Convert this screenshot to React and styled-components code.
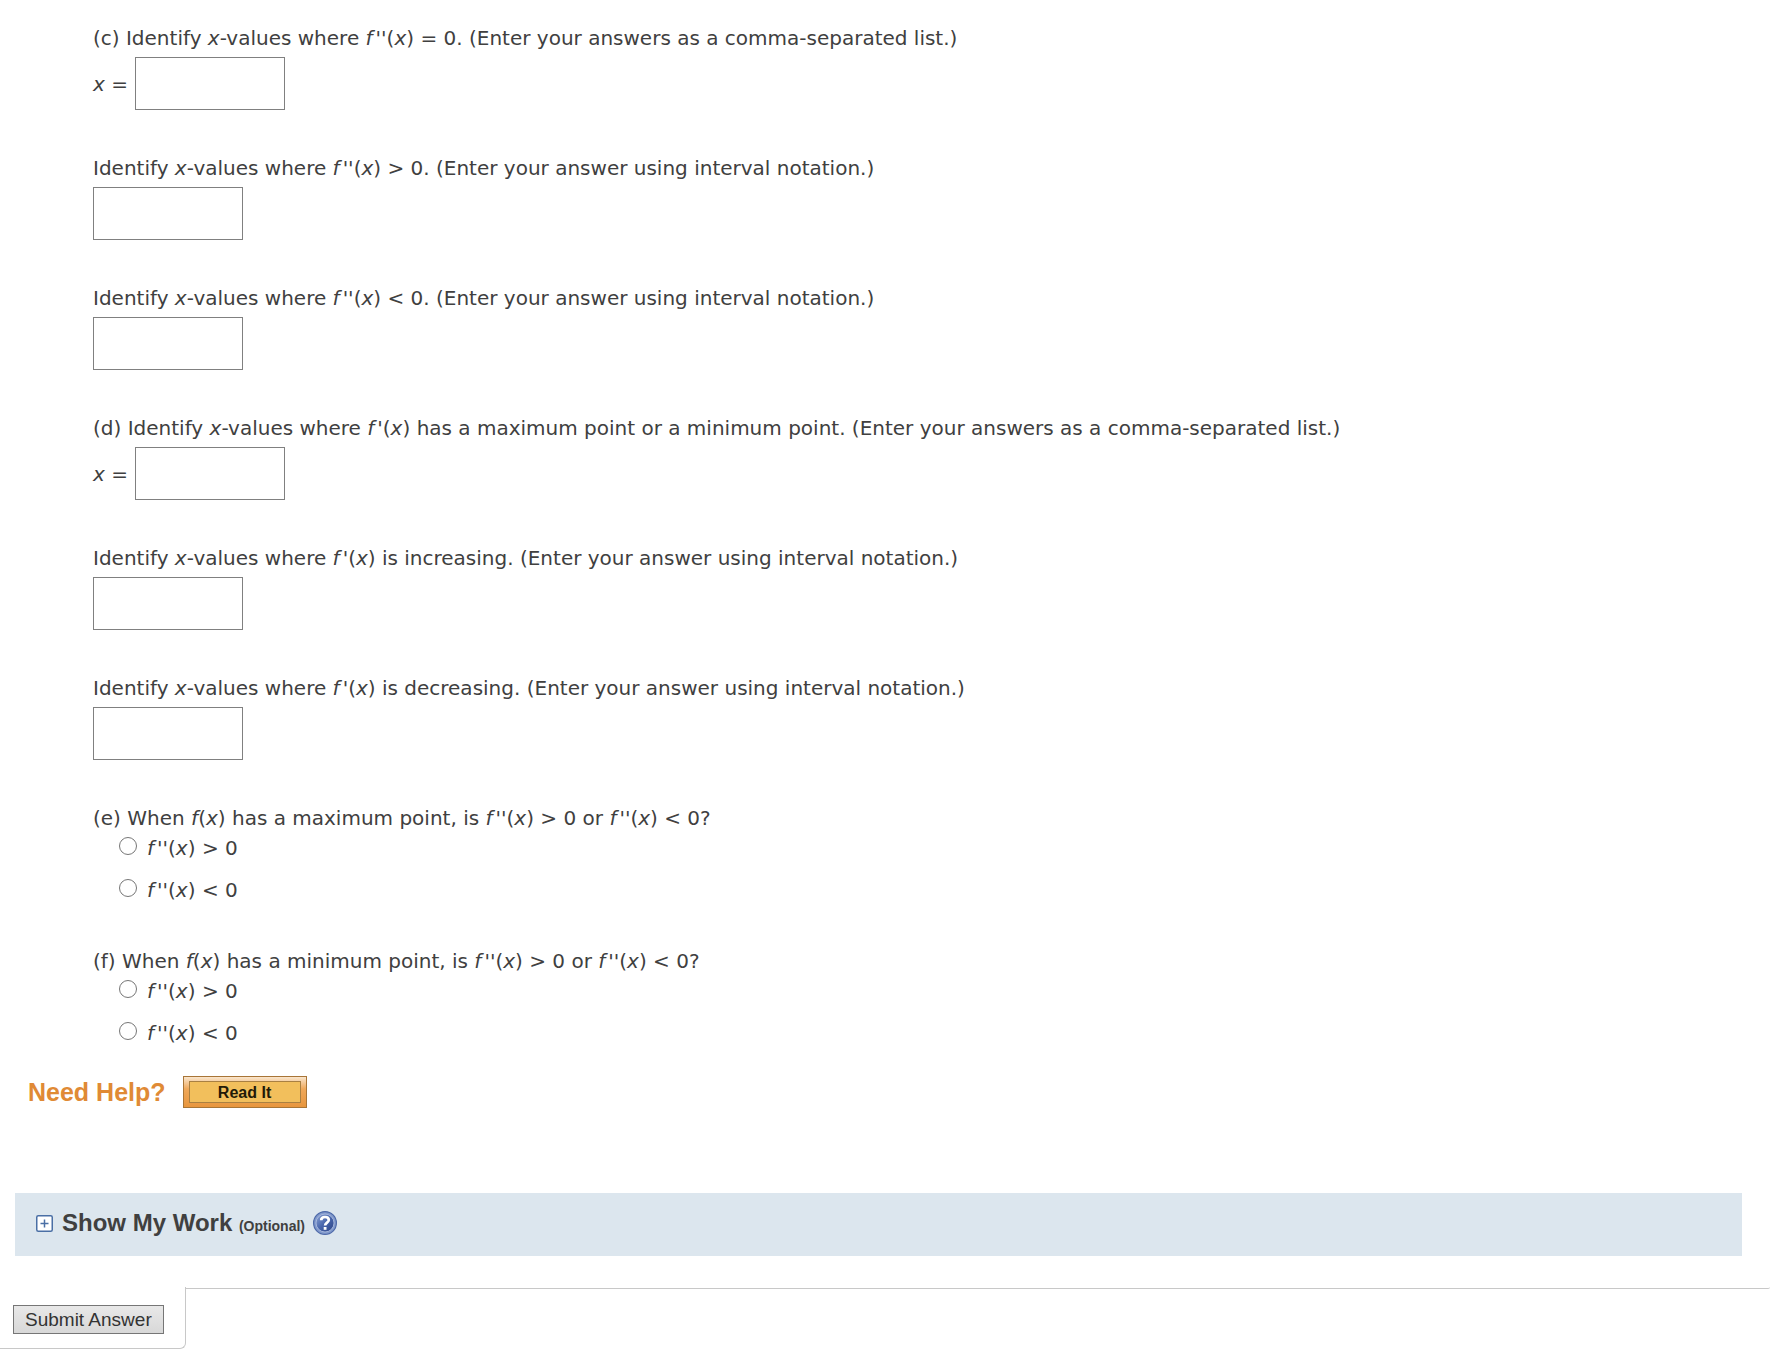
import React, {useState} from 'react'
import styled, {createGlobalStyle} from 'styled-components'

const GlobalStyle = createGlobalStyle`
* {
  box-sizing: border-box;
}
body {
  margin: 0;
  background: #fff;
  color: #404040;
  font-family: Verdana, "DejaVu Sans", sans-serif;
  font-size: 20px;
  line-height: 30px;
}
`

const questions = [
  {id: 'c1', part: '(c)', primes: 2, rest: '= 0. (Enter your answers as a comma-separated list.)', prefix: true},
  {id: 'c2', primes: 2, rest: '> 0. (Enter your answer using interval notation.)'},
  {id: 'c3', primes: 2, rest: '< 0. (Enter your answer using interval notation.)'},
  {id: 'd1', part: '(d)', primes: 1, rest: 'has a maximum point or a minimum point. (Enter your answers as a comma-separated list.)', prefix: true},
  {id: 'd2', primes: 1, rest: 'is increasing. (Enter your answer using interval notation.)'},
  {id: 'd3', primes: 1, rest: 'is decreasing. (Enter your answer using interval notation.)'},
]

const choices = [
  {id: 'e', part: '(e)', extremum: 'maximum'},
  {id: 'f', part: '(f)', extremum: 'minimum'},
]

function Fn({primes = 0}) {
  return <>
    <i>f</i>{primes > 0 && <Prime>{"'".repeat(primes)}</Prime>}(<i>x</i>)
  </>
}

function Question({id, part, primes, rest, prefix}) {
  return <Block>
    <label htmlFor={id}>{part} Identify <i>x</i>-values where <Fn primes={primes}/> {rest}</label>
    <AnswerRow>
      {prefix && <label htmlFor={id}><i>x</i> =</label>}
      <AnswerInput id={id} type="text"/>
    </AnswerRow>
  </Block>
}

function Choice({id, part, extremum}) {
  return <ChoiceGroup>
    <legend>{part} When <Fn/> has a {extremum} point, is <Fn primes={2}/> &gt; 0 or <Fn primes={2}/> &lt; 0?</legend>
    <Options>
      {['>', '<'].map(sign => <Option key={sign}>
        <Radio type="radio" name={id} value={sign}/>
        <span><Fn primes={2}/> {sign} 0</span>
      </Option>)}
    </Options>
  </ChoiceGroup>
}

function PlusIcon() {
  return <svg width="17" height="17" viewBox="0 0 17 17" aria-hidden="true">
    <rect x="0.75" y="0.75" width="15.5" height="15.5" rx="1.5" fill="#fff" stroke="#4a6fa5" strokeWidth="1.5"/>
    <path d="M4.5 8.5h8M8.5 4.5v8" stroke="#4a6fa5" strokeWidth="1.5"/>
  </svg>
}

function HelpIcon() {
  return <svg width="24" height="24" viewBox="0 0 24 24" aria-hidden="true">
    <defs>
      <linearGradient id="helpFill" x1="0" y1="0" x2="1" y2="1">
        <stop offset="0" stopColor="#8ea6d6"/>
        <stop offset="0.5" stopColor="#4865ab"/>
        <stop offset="1" stopColor="#2c4485"/>
      </linearGradient>
    </defs>
    <circle cx="12" cy="12" r="11.4" fill="#8199cb" stroke="#4d69a9" strokeWidth="1.2"/>
    <circle cx="12" cy="12" r="9" fill="url(#helpFill)" stroke="#b3c2e2" strokeWidth="0.8"/>
    <path d="M8.2 9.2C8.2 7 9.8 6 12 6s3.8 1.2 3.8 3c0 2.5-3.7 2.7-3.7 5.4" fill="none" stroke="#fff" strokeWidth="2.7"/>
    <rect x="10.7" y="16" width="2.8" height="2.8" fill="#fff"/>
  </svg>
}

export default function App() {
  const [open, setOpen] = useState(false)
  return <>
    <GlobalStyle/>
    <main>
      <Questions>
        {questions.map(q => <Question key={q.id} {...q}/>)}
        {choices.map(c => <Choice key={c.id} {...c}/>)}
      </Questions>
      <HelpRow>
        <HelpTitle>Need Help?</HelpTitle>
        <ReadButton type="button"><span>Read It</span></ReadButton>
      </HelpRow>
      <WorkBar>
        <WorkToggle type="button" aria-expanded={open} onClick={() => setOpen(!open)}>
          <PlusIcon/>
          <WorkTitle>Show My Work <small>(Optional)</small></WorkTitle>
        </WorkToggle>
        <HelpLink href="#help" aria-label="Help"><HelpIcon/></HelpLink>
      </WorkBar>
    </main>
    <Footer>
      <SubmitTab>
        <SubmitButton type="submit">Submit Answer</SubmitButton>
      </SubmitTab>
      <FooterLine/>
    </Footer>
  </>
}

const Prime = styled.i`
margin-left: 3px;
`

const Questions = styled.section`
padding: 23px 28px 0 93px;
`

const Block = styled.div`
margin-bottom: 43px;
`

const AnswerRow = styled.div`
display: flex;
align-items: center;
gap: 7px;
margin-top: 4px;
`

const AnswerInput = styled.input`
width: 150px;
height: 53px;
padding: 0 8px;
border: 1px solid #808080;
border-radius: 0;
background: #fff;
color: inherit;
font: inherit;
`

const ChoiceGroup = styled.fieldset`
margin: 0;
padding: 0;
border: 0;
& + & {
  margin-top: 41px;
}
legend {
  padding: 0;
}
`

const Options = styled.div`
display: flex;
flex-direction: column;
align-items: flex-start;
gap: 12px;
padding-left: 26px;
`

const Option = styled.label`
display: flex;
align-items: flex-start;
gap: 10px;
`

const Radio = styled.input`
appearance: none;
width: 18px;
height: 18px;
margin: 4px 0 0;
border: 1px solid #767676;
border-radius: 50%;
background: #fff;
&:checked {
  border: 5px solid #0075ff;
}
`

const HelpRow = styled.div`
display: flex;
align-items: center;
gap: 17px;
padding: 28px 28px 0;
`

const HelpTitle = styled.span`
color: #e08a35;
font: bold 25px/32px "Liberation Sans", Arial, sans-serif;
`

const ReadButton = styled.button`
width: 124px;
height: 32px;
padding: 4px 5px;
border: 1px solid #a87537;
background: linear-gradient(#fae6cd, #efa85a 40%, #e8963e);
color: #221a08;
font: bold 16px/18px "Liberation Sans", Arial, sans-serif;
cursor: pointer;
span {
  display: block;
  padding-top: 2px;
  border: 1px solid #a98042;
  background: #f2bf5c;
}
`

const WorkBar = styled.section`
display: flex;
align-items: center;
gap: 8px;
margin: 85px 28px 0 15px;
padding: 15px 21px 18px;
background: #dce6ee;
`

const WorkToggle = styled.button`
display: flex;
align-items: center;
gap: 9px;
padding: 0;
border: 0;
background: none;
color: inherit;
cursor: pointer;
`

const WorkTitle = styled.span`
font: bold 24px/30px "Liberation Sans", Arial, sans-serif;
small {
  font-size: 14px;
  line-height: 14px;
}
`

const HelpLink = styled.a`
display: flex;
`

const Footer = styled.footer`
display: flex;
align-items: flex-start;
margin-top: 31px;
`

const SubmitTab = styled.div`
padding: 18px 21px 14px 13px;
border: solid #c8c8c8;
border-width: 0 1px 1px 0;
border-bottom-right-radius: 6px;
`

const SubmitButton = styled.button`
display: block;
height: 29px;
padding: 0 11px;
border: 1px solid #767676;
border-radius: 0;
background: linear-gradient(#e8e8e8, #d8d8d8);
color: #333;
font: 19px/27px "Liberation Sans", Arial, sans-serif;
cursor: pointer;
`

const FooterLine = styled.div`
flex: 1;
height: 2px;
border-bottom: 1px solid #c8c8c8;
border-bottom-right-radius: 6px;
`
